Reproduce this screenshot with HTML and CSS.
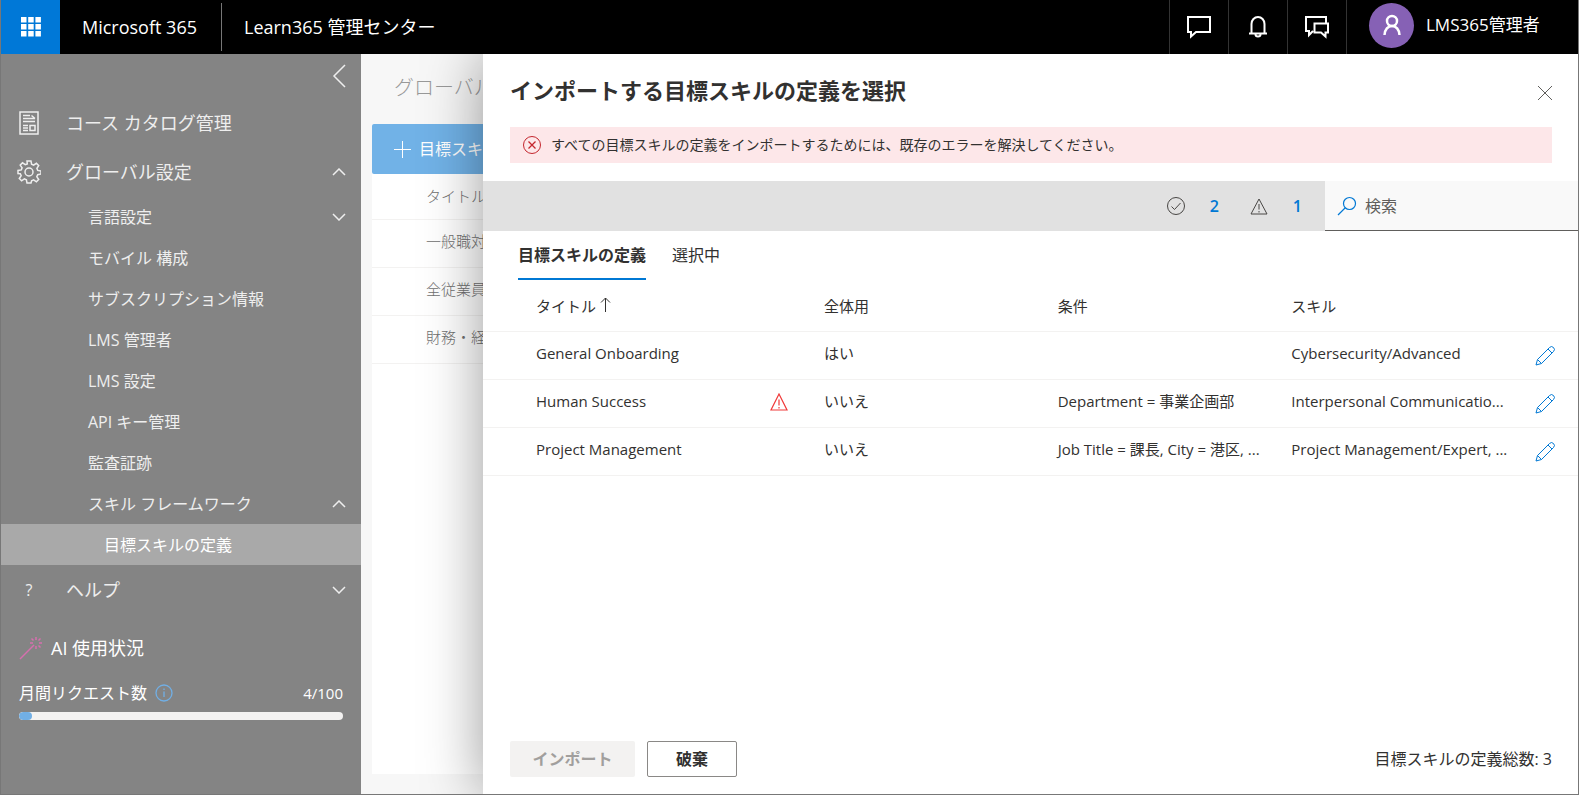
FILE: index.html
```html
<!DOCTYPE html>
<html lang="ja">
<head>
  <meta charset="UTF-8">
  <meta name="viewport" content="width=device-width, initial-scale=1.0">
  <title>Learn365 管理センター</title>
  <link rel="stylesheet" href="styles.css">
</head>
<body>
  <header class="topbar">
    <button class="waffle" aria-label="アプリ起動ツール">
      <svg width="20" height="20" viewBox="0 0 20 20" fill="#fff"><path d="M0 0h5.500v5.500H0zM7.200 0h5.500v5.500H7.200zM14.400 0h5.500v5.500h-5.500zM0 7h5.500v5.500H0zM7.200 7h5.500v5.500H7.200zM14.400 7h5.500v5.500h-5.500zM0 14h5.500v5.500H0zM7.200 14h5.500v5.500H7.200zM14.400 14h5.500v5.500h-5.500z"/></svg>
    </button>
    <a class="brand" href="#">Microsoft 365</a>
    <a class="product" href="#">Learn365 管理センター</a>
    <div class="topbar-actions">
      <button aria-label="チャット">
        <svg width="26" height="24" viewBox="0 0 26 24" fill="none" stroke="#fff" stroke-width="2"><path d="M2 2h22v15H10l-5 4.500V17H2z"/></svg>
      </button>
      <button aria-label="通知">
        <svg width="20" height="24" viewBox="0 0 20 24" fill="none" stroke="#fff" stroke-width="2"><path d="M1 18.500h18M3.500 18V9a6.500 7 0 0 1 13 0v9M7.500 19.500a2.500 2 0 0 0 5 0"/></svg>
      </button>
      <button aria-label="フィードバック">
        <svg width="26" height="24" viewBox="0 0 26 24" fill="none" stroke="#fff" stroke-width="2"><path d="M22 8V2H2v14h3v4l4-4M10.500 8.500H24v9h-2.500v4L17 17.500h-6.500z"/></svg>
      </button>
    </div>
    <button class="account">
      <span class="avatar">
        <svg width="20" height="22" viewBox="0 0 20 22" fill="none" stroke="#fff" stroke-width="2.500"><circle cx="10" cy="7" r="5"/><path d="M2.500 21c.3-5.500 3.500-9 7.500-9s7.200 3.500 7.500 9"/></svg>
      </span>
      LMS365管理者
    </button>
  </header>

  <div class="workspace">
    <nav class="sidebar">
      <button class="collapse" aria-label="メニューを閉じる">
        <svg width="14" height="24" viewBox="0 0 14 24"><path d="M13 1L2 12l11 11"/></svg>
      </button>
      <a class="nav-item" href="#">
        <svg class="nav-icon" width="20" height="24" viewBox="0 0 20 24"><path d="M1 1h18v22H1zM4 4.500h7M4 7.500h12M4 10.500h12M4 14.500h5M4 17h5M4 19.500h5M11 14.500h5v5h-5zM12.500 4.500l3.500 3"/></svg>
        コース カタログ管理
      </a>
      <a class="nav-item" href="#">
        <svg class="nav-icon" width="24" height="24" viewBox="0 0 24 24"><circle cx="12" cy="12" r="4"/><path d="M10 1h4l.6 3.300 2 .9 2.800-1.900 2.300 2.300-1.800 2.800.8 2 3.300.6v3l-3.300.7-.9 2 1.900 2.800-2.300 2.300-2.800-1.900-2 .8L14 23h-4l-.6-3.200-2-.9-2.800 1.900-2.300-2.300 1.900-2.800-.9-2L1 13.500v-3l3.300-.6.8-2-1.900-2.800 2.300-2.300 2.800 1.900 2-.8z"/></svg>
        グローバル設定
        <svg class="chevron" width="14" height="8" viewBox="0 0 14 8"><path d="M1 7l6-6 6 6"/></svg>
      </a>
      <a class="nav-item sub" href="#">
        言語設定
        <svg class="chevron" width="14" height="8" viewBox="0 0 14 8"><path d="M1 1l6 6 6-6"/></svg>
      </a>
      <a class="nav-item sub" href="#">モバイル 構成</a>
      <a class="nav-item sub" href="#">サブスクリプション情報</a>
      <a class="nav-item sub" href="#">LMS 管理者</a>
      <a class="nav-item sub" href="#">LMS 設定</a>
      <a class="nav-item sub" href="#">API キー管理</a>
      <a class="nav-item sub" href="#">監査証跡</a>
      <a class="nav-item sub" href="#">
        スキル フレームワーク
        <svg class="chevron" width="14" height="8" viewBox="0 0 14 8"><path d="M1 7l6-6 6 6"/></svg>
      </a>
      <a class="nav-item sub active" href="#" aria-current="page">目標スキルの定義</a>
      <a class="nav-item" href="#">
        <span class="nav-icon question">?</span>
        ヘルプ
        <svg class="chevron" width="14" height="8" viewBox="0 0 14 8"><path d="M1 1l6 6 6-6"/></svg>
      </a>

      <section class="usage">
        <h2>
          <svg width="24" height="24" viewBox="0 0 24 24" fill="none" stroke="#d66fae" stroke-width="1.500"><path d="M1 23L15 9"/><path d="M17 1v3M17 10v3M11 7h3M20 7h3M12.500 2.500l2 2M19.500 9.500l2 2M21.500 2.500l-2 2"/></svg>
          AI 使用状況
        </h2>
        <div class="usage-row">
          <span id="usage-label">月間リクエスト数</span>
          <svg width="18" height="18" viewBox="0 0 18 18" fill="none" stroke="#71afe5" stroke-width="1.300"><circle cx="9" cy="9" r="8"/><path d="M9 7.500V13M9 4.500V6"/></svg>
          <span class="usage-value">4/100</span>
        </div>
        <div class="meter" role="progressbar" aria-labelledby="usage-label" aria-valuenow="4" aria-valuemax="100">
          <div class="meter-fill" style="width: 4%"></div>
        </div>
      </section>
    </nav>

    <main class="page">
      <h1>グローバル</h1>
      <div class="page-card">
        <button class="add-button">
          <svg width="17" height="17" viewBox="0 0 17 17" stroke="#fff"><path d="M8.500 0v17M0 8.500h17"/></svg>
          目標スキル
        </button>
        <table class="page-table">
          <thead><tr><th>タイトル</th></tr></thead>
          <tbody>
            <tr><td>一般職対</td></tr>
            <tr><td>全従業員</td></tr>
            <tr><td>財務・経</td></tr>
          </tbody>
        </table>
      </div>
    </main>

    <!-- Import panel -->
    <section class="panel" role="dialog" aria-labelledby="panel-title">
      <div class="panel-head">
        <h2 id="panel-title">インポートする目標スキルの定義を選択</h2>
        <button class="close" aria-label="閉じる">
          <svg width="14" height="14" viewBox="0 0 14 14" stroke="#605e5c"><path d="M0 0l14 14M14 0L0 14"/></svg>
        </button>
      </div>
      <p class="alert" role="alert">
        <svg width="20" height="20" viewBox="0 0 20 20" fill="none" stroke="#c4262e"><circle cx="10" cy="10" r="8.500"/><path d="M6.500 6.500l7 7M13.500 6.500l-7 7" stroke-width="1.300"/></svg>
        すべての目標スキルの定義をインポートするためには、既存のエラーを解決してください。
      </p>

      <div class="toolbar">
        <div class="counts">
          <svg width="20" height="20" viewBox="0 0 20 20" fill="none" stroke="#484644"><circle cx="10" cy="10" r="8.500"/><path d="M5.500 10.500l3 3 6-6.500"/></svg>
          <a href="#">2</a>
          <svg width="20" height="20" viewBox="0 0 20 20" fill="none" stroke="#484644"><path d="M10 3L2 18h16zM10 8v5.500M10 15v1.500"/></svg>
          <a href="#">1</a>
        </div>
        <label class="search">
          <svg width="20" height="20" viewBox="0 0 20 20" fill="none" stroke="#0078d4" stroke-width="1.200"><circle cx="12.500" cy="7.500" r="6"/><path d="M8.300 11.800L1 19"/></svg>
          <input type="search" placeholder="検索" aria-label="検索">
        </label>
      </div>

      <div class="tabs" role="tablist">
        <button class="tab selected" role="tab" aria-selected="true">目標スキルの定義</button>
        <button class="tab" role="tab" aria-selected="false">選択中</button>
      </div>

      <table class="import-table">
        <colgroup>
          <col class="col-title">
          <col class="col-state">
          <col class="col-data">
          <col class="col-data">
          <col class="col-data">
          <col class="col-edit">
        </colgroup>
        <thead>
          <tr>
            <th>タイトル <svg width="11" height="15" viewBox="0 0 11 15" fill="none" stroke="#323130"><path d="M5.500 15V1M1 5.500L5.500 1 10 5.500"/></svg></th>
            <th></th>
            <th>全体用</th>
            <th>条件</th>
            <th>スキル</th>
            <th></th>
          </tr>
        </thead>
        <tbody>
          <tr>
            <td>General Onboarding</td>
            <td></td>
            <td>はい</td>
            <td></td>
            <td>Cybersecurity/Advanced</td>
            <td><button class="edit" aria-label="編集"><svg width="20" height="20" viewBox="0 0 20 20"><path d="M1 19l1.500-5.500L14.500 1.500a2.500 2.500 0 0 1 4 4L6.500 17.500zM2.500 13.500l4 4M13 3l4 4"/></svg></button></td>
          </tr>
          <tr>
            <td>Human Success</td>
            <td><svg width="18" height="18" viewBox="0 0 18 18" fill="none" stroke="#f03a3a" stroke-width="1.200"><path d="M9 1L1 17h16zM9 6.500v6M9 14v1.500"/></svg></td>
            <td>いいえ</td>
            <td>Department = 事業企画部</td>
            <td>Interpersonal Communicatio...</td>
            <td><button class="edit" aria-label="編集"><svg width="20" height="20" viewBox="0 0 20 20"><path d="M1 19l1.500-5.500L14.500 1.500a2.500 2.500 0 0 1 4 4L6.500 17.500zM2.500 13.500l4 4M13 3l4 4"/></svg></button></td>
          </tr>
          <tr>
            <td>Project Management</td>
            <td></td>
            <td>いいえ</td>
            <td>Job Title = 課長, City = 港区, ...</td>
            <td>Project Management/Expert, ...</td>
            <td><button class="edit" aria-label="編集"><svg width="20" height="20" viewBox="0 0 20 20"><path d="M1 19l1.500-5.500L14.500 1.500a2.500 2.500 0 0 1 4 4L6.500 17.500zM2.500 13.500l4 4M13 3l4 4"/></svg></button></td>
          </tr>
        </tbody>
      </table>

      <div class="panel-foot">
        <button class="btn btn-import" disabled>インポート</button>
        <button class="btn btn-discard">破棄</button>
        <span class="total">目標スキルの定義総数: 3</span>
      </div>
    </section>
  </div>
</body>
</html>
```

FILE: styles.css
```css
* {
  box-sizing: border-box;
}

body {
  margin: 0;
  min-height: 100vh;
  display: flex;
  flex-direction: column;
  border: 1px solid #777;
  border-top: 0;
  font-family: "Open Sans", "Noto Sans CJK JP", sans-serif;
  font-size: 15px;
  line-height: 20px;
  color: #323130;
}

a {
  color: inherit;
  text-decoration: none;
}

button {
  padding: 0;
  border: 0;
  background: none;
  color: inherit;
  font: inherit;
  cursor: pointer;
}

h1,
h2,
p {
  margin: 0;
}

svg {
  flex-shrink: 0;
}

/* Top bar */
.topbar {
  height: 54px;
  display: flex;
  align-items: center;
  background: #000;
  color: #fff;
  font-size: 18px;
}

.waffle {
  width: 59px;
  height: 54px;
  display: flex;
  align-items: center;
  justify-content: center;
  background: #0078d7;
}

.brand {
  width: 162px;
  padding-left: 22px;
  line-height: 48px;
  border-right: 1px solid #777;
}

.product {
  padding-left: 22px;
}

.topbar-actions {
  display: flex;
  margin-left: auto;
  border-right: 1px solid #333;
}

.topbar-actions button {
  width: 59px;
  height: 54px;
  display: flex;
  align-items: center;
  justify-content: center;
  border-left: 1px solid #333;
}

.account {
  width: 231px;
  height: 54px;
  padding: 0 0 4px 22px;
  display: flex;
  align-items: center;
  gap: 12px;
  font-size: 17px;
}

.avatar {
  width: 45px;
  height: 45px;
  display: flex;
  align-items: center;
  justify-content: center;
  border-radius: 50%;
  background: #8661b5;
}

.workspace {
  position: relative;
  flex: 1;
  display: flex;
  overflow: hidden;
}

/* Sidebar */
.sidebar {
  width: 360px;
  display: flex;
  flex-direction: column;
  background: #848484;
  color: #eee;
}

.sidebar svg {
  fill: none;
}

.collapse {
  height: 44px;
  padding-right: 15px;
  display: flex;
  align-items: center;
  justify-content: flex-end;
}

.collapse svg,
.nav-item svg {
  stroke: #eee;
  stroke-width: 1.5;
}

.nav-item {
  height: 49px;
  padding: 0 15px 0 16px;
  display: flex;
  align-items: center;
  font-size: 18px;
}

.nav-icon {
  width: 24px;
  margin-right: 25px;
}

.question {
  text-align: center;
  font-size: 16px;
}

.nav-item.sub {
  height: 41px;
  padding-left: 87px;
  font-size: 16px;
}

.nav-item.active {
  padding-left: 103px;
  background: #a9a9a9;
  color: #fff;
}

.chevron {
  margin-left: auto;
}

.usage {
  padding: 20px 18px;
  color: #fff;
}

.usage h2 {
  height: 28px;
  display: flex;
  align-items: center;
  gap: 8px;
  font-size: 18px;
  font-weight: 400;
}

.usage-row {
  margin: 20px 0 8px;
  display: flex;
  align-items: center;
  gap: 8px;
  font-size: 16px;
  line-height: 22px;
}

.usage-value {
  margin-left: auto;
  font-size: 15px;
}

.meter {
  height: 8px;
  border-radius: 4px;
  background: #f3f2f1;
  overflow: hidden;
}

.meter-fill {
  height: 8px;
  border-radius: 4px;
  background: #71afe5;
}

/* Page behind the panel */
.page {
  flex: 1;
  padding: 0 11px 20px;
  display: flex;
  flex-direction: column;
  background: #f7f7f7;
}

.page h1 {
  height: 70px;
  padding-left: 22px;
  line-height: 68px;
  font-size: 20px;
  font-weight: 300;
  color: #999;
}

.page-card {
  flex: 1;
  background: #fff;
}

.add-button {
  width: 100%;
  height: 50px;
  padding: 0 22px;
  display: flex;
  align-items: center;
  gap: 8px;
  border-radius: 2px;
  background: #71b2e7;
  color: #fff;
  font-size: 16px;
}

.page-table {
  width: 100%;
  border-collapse: collapse;
  color: #707070;
}

.page-table th,
.page-table td {
  height: 48px;
  padding: 0 0 4px 54px;
  border-bottom: 1px solid #f3f2f1;
  text-align: left;
  font-weight: 300;
}

.page-table th {
  height: 45px;
  padding-bottom: 0;
}

/* Import panel */
.panel {
  position: absolute;
  top: 0;
  right: 0;
  bottom: 0;
  left: 482px;
  display: flex;
  flex-direction: column;
  background: #fff;
  box-shadow: 0 0 56px rgba(0, 0, 0, 0.4);
}

.panel-head {
  height: 73px;
  padding: 0 26px 0 27px;
  display: flex;
  align-items: center;
  justify-content: space-between;
}

.panel-head h2 {
  padding-bottom: 2px;
  font-size: 22px;
  font-weight: 600;
}

.close {
  display: flex;
  padding: 4px 0 0 4px;
}

.alert {
  height: 36px;
  margin: 0 26px 18px 27px;
  padding: 0 12px;
  display: flex;
  align-items: center;
  gap: 9px;
  background: #fde7e9;
  font-size: 14px;
}

.toolbar {
  height: 50px;
  display: flex;
  background: #e1e1e1;
}

.counts {
  flex: 1;
  padding-right: 23px;
  display: flex;
  align-items: center;
  justify-content: flex-end;
}

.counts svg {
  margin-left: 30px;
}

.counts a {
  margin-left: 24px;
  color: #0078d4;
  font-size: 16px;
  font-weight: 600;
}

.search {
  width: 253px;
  padding: 0 12px;
  display: flex;
  align-items: center;
  gap: 8px;
  border-bottom: 1px solid #605e5c;
  background: #f9f9f9;
}

.search input {
  width: 100%;
  padding: 0;
  border: 0;
  outline: 0;
  background: none;
  font: inherit;
  font-size: 16px;
}

.search input::placeholder {
  color: #605e5c;
}

.tabs {
  height: 50px;
  padding-left: 35px;
  display: flex;
  gap: 26px;
}

.tab {
  height: 49px;
  border-bottom: 2px solid transparent;
  font-size: 16px;
}

.tab.selected {
  border-bottom-color: #0078d4;
  font-weight: 600;
}

.import-table {
  width: 100%;
  table-layout: fixed;
  border-collapse: collapse;
}

.import-table th,
.import-table td {
  height: 48px;
  padding: 0 8px 4px;
  border-bottom: 1px solid #f3f2f1;
  text-align: left;
  font-weight: 400;
  white-space: nowrap;
}

.import-table th {
  height: 50px;
  padding-bottom: 0;
}

.import-table th:first-child,
.import-table td:first-child {
  padding-left: 53px;
}

.import-table td:last-child {
  padding: 0 23px 0 0;
  text-align: right;
}

.import-table svg {
  vertical-align: middle;
}

.import-table th svg {
  vertical-align: baseline;
}

.col-title {
  width: 279px;
}

.col-state {
  width: 54px;
}

.col-data {
  width: auto;
}

.col-edit {
  width: 61px;
}

.edit svg {
  fill: none;
  stroke: #0078d4;
}

.panel-foot {
  margin-top: auto;
  padding: 0 26px 17px 27px;
  display: flex;
  align-items: center;
  gap: 12px;
}

.btn {
  height: 36px;
  border-radius: 2px;
  font-size: 16px;
  font-weight: 600;
}

.btn-import {
  width: 125px;
  background: #f3f2f1;
  color: #a19f9d;
}

.btn-discard {
  width: 90px;
  border: 1px solid #8a8886;
}

.total {
  margin-left: auto;
  font-size: 16px;
}
```
